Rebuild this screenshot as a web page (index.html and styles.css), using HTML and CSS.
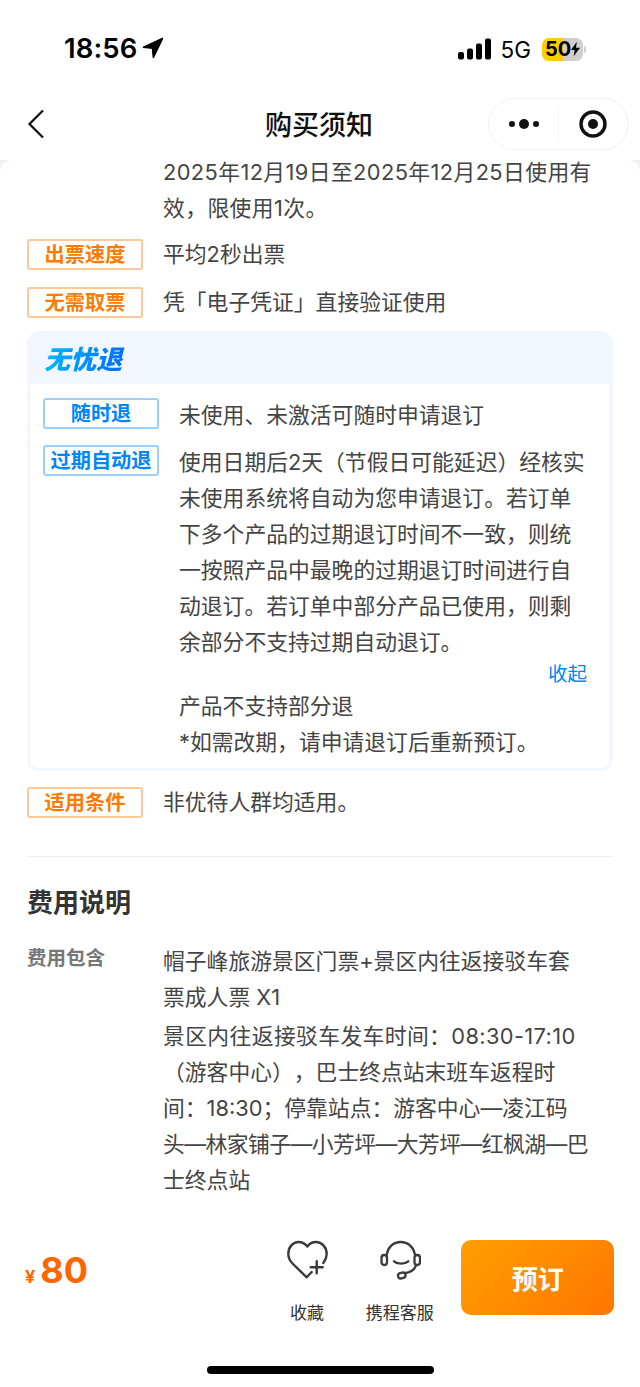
FILE: index.html
```html
<!DOCTYPE html>
<html lang="zh-CN">
<head>
<meta charset="utf-8">
<title>购买须知</title>
<link rel="stylesheet" href="styles.css">
</head>
<body>
<div class="page">
  <header class="status">
    <div class="time-wrap">
      <span class="time">18:56</span>
      <svg class="loc" width="22" height="22" viewBox="0 0 22 22"><path d="M20.5 1.5 1.5 10.2l9 .9.9 9.4z" fill="#000" stroke="#000" stroke-width="1.6" stroke-linejoin="round"/></svg>
    </div>
    <div class="status-right">
      <svg width="33" height="22" viewBox="0 0 33 22"><g fill="#000"><rect x="0" y="14" width="6" height="7.5" rx="2"/><rect x="9" y="10.5" width="6" height="11" rx="2"/><rect x="18" y="5.500" width="6" height="16" rx="2"/><rect x="27" y="0.500" width="6" height="21" rx="2"/></g></svg>
      <span class="net">5G</span>
      <div class="battery">
        <div class="batt-body"><span class="batt-num">50</span><svg class="bolt" width="9" height="16" viewBox="0 0 10 16"><path d="M6.500 0 0 9h4l-1 7 7-9.500H5.500z" fill="#000"/></svg></div>
        <span class="batt-cap"></span>
      </div>
    </div>
  </header>
  <nav class="nav">
    <svg class="back" width="18" height="30" viewBox="0 0 18 30"><path d="M16 1.500 2.500 15 16 28.500" fill="none" stroke="#111" stroke-width="2.200"/></svg>
    <h1 class="title">购买须知</h1>
    <div class="capsule">
      <div class="cap-side">
        <svg width="32" height="12" viewBox="0 0 32 12"><g fill="#111"><circle cx="4" cy="6" r="3"/><circle cx="16" cy="6" r="5"/><circle cx="28" cy="6" r="3"/></g></svg>
      </div>
      <div class="cap-side">
        <svg width="28" height="28" viewBox="0 0 28 28"><circle cx="14" cy="14" r="12" fill="none" stroke="#111" stroke-width="3.400"/><circle cx="14" cy="14" r="5" fill="#111"/></svg>
      </div>
    </div>
  </nav>
  <main class="content">
    <div class="scroll">
      <div class="row first"><div class="spacer"></div><p class="text date">2025年12月19日至2025年12月25日使用有效，限使用1次。</p></div>
      <div class="row after-first"><span class="tag">出票速度</span><p class="text">平均2秒出票</p></div>
      <div class="row wide"><span class="tag">无需取票</span><p class="text">凭「电子凭证」直接验证使用</p></div>
      <section class="card">
        <div class="card-head"><span class="logo">无忧退</span></div>
        <div class="card-body">
          <div class="row"><span class="tag blue">随时退</span><p class="text">未使用、未激活可随时申请退订</p></div>
          <div class="row"><span class="tag blue">过期自动退</span><div class="col">
            <p class="text">使用日期后2天（节假日可能延迟）经核实未使用系统将自动为您申请退订。若订单下多个产品的过期退订时间不一致，则统一按照产品中最晚的过期退订时间进行自动退订。若订单中部分产品已使用，则剩余部分不支持过期自动退订。</p>
            <div class="fold">收起</div>
            <p class="text">产品不支持部分退<br>*如需改期，请申请退订后重新预订。</p>
          </div></div>
        </div>
      </section>
      <div class="row after-card"><span class="tag">适用条件</span><p class="text">非优待人群均适用。</p></div>
      <hr class="divider">
      <h2 class="heading">费用说明</h2>
      <div class="fee">
        <span class="fee-label">费用包含</span>
        <div class="fee-text">
          <p class="text">帽子峰旅游景区门票+景区内往返接驳车套票成人票 X1</p>
          <p class="text"><span class="roomy">景区内往返接驳车发车时间：08:30-17:10</span>（游客中心），巴士终点站末班车返程时间：18:30；停靠站点：游客中心—凌江码<span class="tight">头—林家铺子—小芳坪—大芳坪—红枫湖—巴</span>士终点站</p>
        </div>
      </div>
    </div>
  </main>
  <footer class="footer">
    <div class="bar">
      <div class="price"><span class="yen">¥</span><span class="amount">80</span></div>
      <div class="action fav">
        <svg width="42" height="40" viewBox="0 0 42 40"><path d="M37.3 23C39.500 20 40.700 17.500 40.700 14 40.700 7 35.500 2 30 2 26.500 2 23.500 3.500 21.300 6.500 19 3.500 16 2 12.500 2 7 2 2.300 7 2.300 14 2.300 18 4 21 7 24L20.700 37.300 25.700 32" fill="none" stroke="#3a3a3a" stroke-width="2.400" stroke-linecap="round" stroke-linejoin="round"/><path d="M30.700 21.300V33.300M24.700 27.300H36.700" fill="none" stroke="#3a3a3a" stroke-width="2.400" stroke-linecap="round"/></svg>
        <span class="act-label">收藏</span>
      </div>
      <div class="action help">
        <svg width="42" height="40" viewBox="0 0 42 40"><g fill="none" stroke="#3a3a3a" stroke-width="2.300" stroke-linecap="round"><path d="M7.700 14.700C9 7 14.500 2 21.700 2S34.500 7 36 14.700"/><rect x="2.500" y="15" width="5.500" height="10" rx="2.700"/><rect x="35.500" y="15" width="5.500" height="10" rx="2.700"/><path d="M15 21.300c3.500 3.200 10.500 3.200 14.300 0"/><path d="M37 25.500c-1.500 4-5.500 6.800-10.500 7.500"/><rect x="19" y="32.800" width="7.500" height="5.400" rx="2.700" transform="rotate(-15 22.700 35.500)"/></g></svg>
        <span class="act-label">携程客服</span>
      </div>
      <button class="book">预订</button>
    </div>
    <div class="home"></div>
  </footer>
</div>
</body>
</html>
```
FILE: styles.css
```css
* { box-sizing: border-box; }
html, body { margin: 0; padding: 0; background: #fff; }
body { font-family: Inter, "Noto Sans CJK SC", "Noto Sans", sans-serif; color: #333; text-spacing-trim: space-all; }
p, h1, h2 { margin: 0; }
.page { width: 640px; height: 1387px; display: flex; flex-direction: column; overflow: hidden; background: #f3f3f3; }

.status { height: 96px; flex: none; background: #fff; display: flex; justify-content: space-between; align-items: flex-start; padding: 30px 54px 0 65px; }
.time-wrap { display: flex; align-items: center; gap: 5px; height: 36px; }
.time { font-family: Inter, "Liberation Sans", sans-serif; font-weight: 600; font-size: 27.500px; color: #000; letter-spacing: .1px; margin-left: -1px; }
.status-right { display: flex; align-items: center; height: 36px; margin-top: 1px; }
.net { font-family: Inter, "Liberation Sans", sans-serif; font-size: 22.500px; color: #000; margin: 0 11px 0 10px; }
.battery { display: flex; align-items: center; gap: 1px; }
.batt-body { width: 41px; height: 23px; border-radius: 7px; background: linear-gradient(90deg, #ffcc00 50%, #cfcfcf 50%); display: flex; align-items: center; padding-left: 3px; overflow: hidden; }
.batt-num { font-family: Inter, "Liberation Sans", sans-serif; font-weight: 700; font-size: 20px; color: #000; line-height: 23px; }
.bolt { margin-left: 0; flex: none; }
.batt-cap { width: 2px; height: 7px; background: #cfcfcf; border-radius: 0 2px 2px 0; }

.nav { height: 64px; flex: none; background: #fff; display: flex; align-items: center; justify-content: center; position: relative; }
.back { position: absolute; left: 27px; top: 13px; }
.title { font-family: "Noto Sans CJK SC", sans-serif; font-size: 27px; font-weight: 500; color: #111; line-height: 40px; margin-top: -8px; margin-left: -2px; }
.capsule { position: absolute; left: 488px; top: 2px; width: 141px; height: 52px; border: 1px solid #f2f2f2; border-radius: 26px; background: #fff; display: flex; z-index: 1; }
.cap-side { flex: 1; display: flex; align-items: center; justify-content: center; }
.cap-side:first-child { position: relative; }
.cap-side:first-child::after { content: ""; position: absolute; right: 0; top: 8px; bottom: 8px; width: 1px; background: #f4f4f4; }

.content { flex: 1; min-height: 0; background: #fff; border-radius: 12px 12px 0 0; }
.scroll { padding: 0 27px; margin-top: -6px; }
.row { display: flex; align-items: flex-start; gap: 20px; margin-top: 11px; }
.row.first { margin-top: 0; }
.row.after-first { margin-top: 10px; }
.row.wide { margin-top: 12px; }
.row.after-card { margin-top: 13px; }
.spacer { width: 116px; flex: none; }
.text { font-size: 21.800px; line-height: 36px; color: #444; flex: 1; min-width: 0; }
.date { letter-spacing: .4px; }
.tag { flex: none; width: 116px; height: 31px; margin-top: 3px; border: 2px solid #ffc898; border-radius: 3px; color: #ff7a00; font-family: "Noto Sans CJK SC", sans-serif; font-size: 20.200px; font-weight: 700; line-height: 26px; text-align: center; }
.tag.blue { border-color: #99d0ff; color: #0086f6; margin-top: 1px; }

.card { margin-top: 11px; border: 3px solid #f2f7ff; border-top: 0; border-radius: 12px; overflow: hidden; height: 440px; }
.card-head { height: 53px; background: #f2f7ff; padding: 10px 20px 0; margin: 0 -3px; }
.logo { display: inline-block; font-family: "Noto Sans CJK SC", sans-serif; font-size: 26px; font-weight: 900; line-height: 34px; transform: skewX(-14deg); background: linear-gradient(90deg, #00b4ff, #006dff); -webkit-background-clip: text; background-clip: text; color: transparent; }
.card-body { padding: 13px 23px 0 13px; }
.card-body .row:first-child { margin-top: 0; }
.card-body .row { margin-top: 11px; }
.col { flex: 1; min-width: 0; display: flex; flex-direction: column; }
.fold { font-family: "Noto Sans CJK SC", sans-serif; font-size: 19.500px; line-height: 28px; color: #0086f6; text-align: right; margin: -1px 0 1px; }
.col .text { flex: none; }

.divider { border: 0; height: 1px; background: #f0f0f0; margin: 36px 0 0; }
.heading { font-family: "Noto Sans CJK SC", sans-serif; font-size: 26px; font-weight: 700; color: #333; line-height: 36px; margin-top: 26px; }
.fee { display: flex; align-items: flex-start; gap: 58px; margin-top: 24px; }
.fee-label { flex: none; width: 78px; font-family: "Noto Sans CJK SC", sans-serif; font-size: 19.500px; font-weight: 700; color: #777; line-height: 28px; }
.fee-text { width: 428px; flex: none; display: flex; flex-direction: column; gap: 3px; }
.fee-text .text { flex: none; }
.roomy { display: block; letter-spacing: .38px; white-space: nowrap; }
.tight { display: block; letter-spacing: -.55px; white-space: nowrap; }

.footer { height: 167px; flex: none; background: #fff; display: flex; flex-direction: column; }
.bar { display: flex; align-items: flex-start; padding: 20px 26px 0 25px; height: 146px; }
.price { display: flex; align-items: baseline; gap: 5px; width: 240px; margin-top: 5px; color: #ff6600; font-family: Inter, sans-serif; font-weight: 700; }
.yen { font-size: 18px; }
.amount { font-size: 36px; font-weight: 700; line-height: 50px; }
.action { display: flex; flex-direction: column; align-items: center; width: 93px; }
.action.fav { margin-left: -4px; }
.act-label { font-family: "Noto Sans CJK SC", sans-serif; font-size: 17px; line-height: 24px; color: #333; margin-top: 20px; white-space: nowrap; }
.book { margin-left: 15px; width: 153px; height: 75px; border: 0; border-radius: 10px; background: linear-gradient(135deg, #ff9f00, #ff7600); color: #fff; font: 700 26px "Noto Sans CJK SC", sans-serif; }
.home { width: 227px; height: 8px; border-radius: 4px; background: #000; align-self: center; margin-left: 1px; }
```
